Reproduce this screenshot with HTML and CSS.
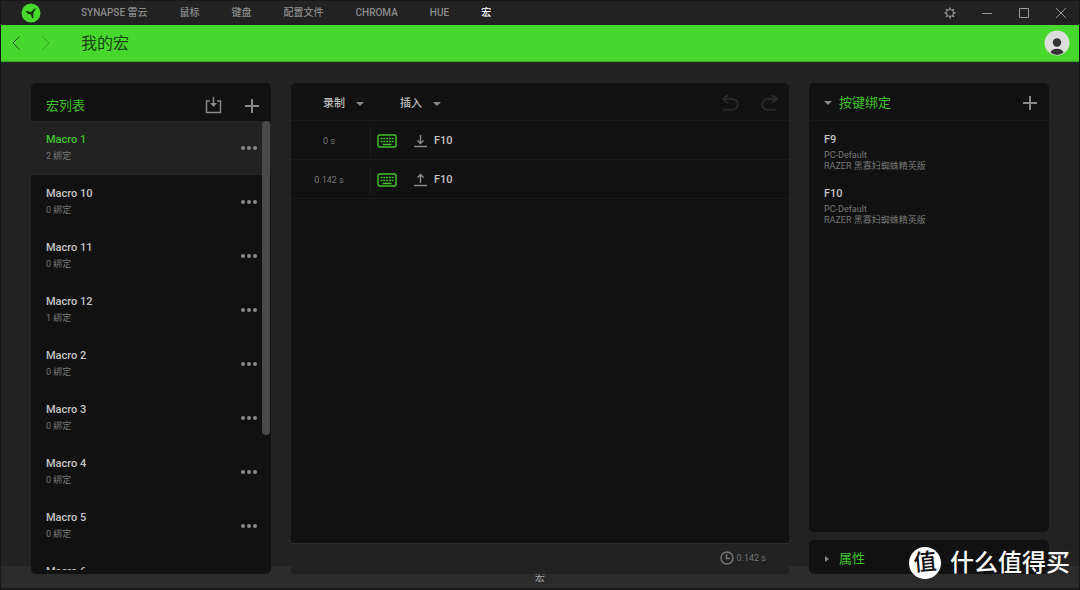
FILE: index.html
```html
<!DOCTYPE html>
<html lang="zh-CN">
<head>
<meta charset="utf-8">
<title>我的宏</title>
<link rel="stylesheet" href="styles.css">
</head>
<body>
<div class="window">
  <header class="topbar">
    <svg class="logo" viewBox="0 0 20 20" aria-hidden="true"><circle cx="10" cy="10" r="9.5" fill="#47d92d"/><path d="M4.600 8.600Q5.500 7.800 7 8.300L10 9.300L13 6Q14 5.300 14.800 5.800L12.200 10.500L12.600 14.500Q12 15.600 11 15.200L10 11.600Q6.500 11.200 4.600 8.600Z" fill="#17300f"/></svg>
    <nav class="tabs">
      <a href="#">SYNAPSE 雷云</a><a href="#">鼠标</a><a href="#">键盘</a><a href="#">配置文件</a><a href="#">CHROMA</a><a href="#">HUE</a><a href="#" class="current">宏</a>
    </nav>
    <div class="controls">
      <button aria-label="设置"><svg viewBox="0 0 12 12"><circle cx="6" cy="6" r="3.500"/><path d="M6 .500v2M6 9.500v2M.500 6h2M9.500 6h2M2.100 2.100l1.400 1.400M8.500 8.500l1.400 1.400M2.100 9.900l1.400-1.400M8.500 3.500l1.400-1.400" stroke-width="1.500"/></svg></button>
      <button aria-label="最小化"><svg viewBox="0 0 12 12"><path d="M1 6.500h10"/></svg></button>
      <button aria-label="最大化"><svg viewBox="0 0 12 12"><path d="M1.500 1.500h9v9h-9z"/></svg></button>
      <button aria-label="关闭"><svg viewBox="0 0 12 12"><path d="M1 1l10 10M11 1L1 11"/></svg></button>
    </div>
  </header>
  <div class="titlebar">
    <button class="arrow" aria-label="后退"><svg viewBox="0 0 8 14"><path d="M7.500.500L1 7l6.500 6.500"/></svg></button>
    <button class="arrow forward" aria-label="前进"><svg viewBox="0 0 8 14"><path d="M.500.500L7 7 .500 13.500"/></svg></button>
    <h1>我的宏</h1>
    <button class="avatar" aria-label="账户"><svg viewBox="0 0 26 26"><circle cx="13" cy="13" r="12.500" fill="#dcdedc"/><circle cx="13" cy="12.500" r="4.200" fill="#333"/><path d="M6.500 22.200Q8 18.700 13 18.700T19.500 22.200Q17 25 13 25T6.500 22.200Z" fill="#333"/></svg></button>
  </div>
  <main class="main">
    <section class="panel macros">
      <div class="panel-head">
        <h2>宏列表</h2>
        <button aria-label="导入"><svg class="import" viewBox="0 0 18 18"><path d="M5 4H1.500v11.500h14V4H12" stroke-width="1.500"/><path d="M8.500 0v8" stroke-width="1.500"/><path d="M5 6h7l-3.500 4z" fill="currentColor" stroke="none"/></svg></button>
        <button aria-label="添加宏"><svg class="plus" viewBox="0 0 14 14"><path d="M7 0v14M0 7h14"/></svg></button>
      </div>
      <div class="list-wrap">
        <ul class="list">
          <li class="selected"><div><b>Macro 1</b><small>2 綁定</small></div><button aria-label="更多"><i></i><i></i><i></i></button></li>
          <li><div><b>Macro 10</b><small>0 綁定</small></div><button aria-label="更多"><i></i><i></i><i></i></button></li>
          <li><div><b>Macro 11</b><small>0 綁定</small></div><button aria-label="更多"><i></i><i></i><i></i></button></li>
          <li><div><b>Macro 12</b><small>1 綁定</small></div><button aria-label="更多"><i></i><i></i><i></i></button></li>
          <li><div><b>Macro 2</b><small>0 綁定</small></div><button aria-label="更多"><i></i><i></i><i></i></button></li>
          <li><div><b>Macro 3</b><small>0 綁定</small></div><button aria-label="更多"><i></i><i></i><i></i></button></li>
          <li><div><b>Macro 4</b><small>0 綁定</small></div><button aria-label="更多"><i></i><i></i><i></i></button></li>
          <li><div><b>Macro 5</b><small>0 綁定</small></div><button aria-label="更多"><i></i><i></i><i></i></button></li>
          <li><div><b>Macro 6</b></div><button aria-label="更多"><i></i><i></i><i></i></button></li>
        </ul>
        <div class="thumb"></div>
      </div>
    </section>
    <section class="panel editor">
      <div class="toolbar">
        <button class="menu">录制<span class="caret"></span></button>
        <button class="menu">插入<span class="caret"></span></button>
        <div class="history">
          <button aria-label="撤销"><svg viewBox="0 0 18 18"><path d="M7 0L2 4l5 4M2 4h9.500a5.300 5.300 0 0 1 0 10.700H2"/></svg></button>
          <button aria-label="重做"><svg viewBox="0 0 18 18"><path d="M11 0l5 4-5 4M16 4H6.500a5.300 5.300 0 0 0 0 10.700H15"/></svg></button>
        </div>
      </div>
      <div class="event">
        <span class="time">0 s</span>
        <svg class="keyboard" viewBox="0 0 20 14"><rect x="1" y="1" width="18" height="12" rx="1.500"/><path d="M3.500 4.500h13M3.500 7.500h13" stroke-dasharray="2 .800"/><path d="M5.500 10.500h9"/></svg>
        <svg class="press" viewBox="0 0 13 14"><path d="M6.500 1v8M3.500 6.500l3 3 3-3M0 12.500h13"/></svg>
        <span class="key">F10</span>
      </div>
      <div class="event">
        <span class="time">0.142 s</span>
        <svg class="keyboard" viewBox="0 0 20 14"><rect x="1" y="1" width="18" height="12" rx="1.500"/><path d="M3.500 4.500h13M3.500 7.500h13" stroke-dasharray="2 .800"/><path d="M5.500 10.500h9"/></svg>
        <svg class="press" viewBox="0 0 13 14"><path d="M6.500 10V1.500M3.500 4.500l3-3 3 3M0 12.500h13"/></svg>
        <span class="key">F10</span>
      </div>
      <div class="duration"><svg viewBox="0 0 14 14"><circle cx="7" cy="7" r="6"/><path d="M6.500 3v4.500H10"/></svg>0.142 s</div>
    </section>
    <aside class="side">
      <section class="panel bindings">
        <div class="side-head"><span class="caret"></span><h2>按键绑定</h2><button aria-label="添加绑定"><svg class="plus" viewBox="0 0 14 14"><path d="M7 0v14M0 7h14"/></svg></button></div>
        <article><b>F9</b><p>PC-Default<br>RAZER 黑寡妇蜘蛛精英版</p></article>
        <article><b>F10</b><p>PC-Default<br>RAZER 黑寡妇蜘蛛精英版</p></article>
      </section>
      <section class="panel properties"><span class="caret right"></span><h2>属性</h2></section>
    </aside>
  </main>
  <footer class="footer">宏</footer>
</div>
<div class="watermark"><span class="badge">值</span>什么值得买</div>
</body>
</html>
```
FILE: styles.css
```css
* { box-sizing: border-box; }
body {
  margin: 0;
  background: #222;
  color: #bbb;
  font: 11px/16px Roboto, "Noto Sans CJK SC", sans-serif;
}
button { margin: 0; padding: 0; border: 0; background: none; color: inherit; font: inherit; display: flex; }
svg { display: block; fill: none; stroke: currentColor; }
h1, h2, p, ul { margin: 0; padding: 0; font-weight: 400; }
.window { display: flex; flex-direction: column; height: 100vh; border: 1px solid #171717; border-bottom-width: 2px; }

.topbar { display: flex; align-items: center; height: 24px; flex: none; padding: 0 12px 0 20px; }
.logo { width: 20px; height: 20px; stroke: none; }
.tabs { display: flex; gap: 32px; margin-left: 40px; }
.tabs a { color: #8a8a8a; text-decoration: none; font-size: 10px; font-weight: 500; }
.tabs .current { color: #fff; }
.controls { display: flex; gap: 25px; margin-left: auto; color: #999; }
.controls svg { width: 12px; height: 12px; }

.titlebar { display: flex; align-items: center; height: 37px; flex: none; padding: 0 9px 0 11px; background: #47d82d; border-bottom: 1px solid #35aa22; color: #174b0f; }
.arrow svg { width: 8px; height: 14px; }
.forward { margin-left: 22px; color: #36a323; }
.titlebar h1 { margin-left: 31px; padding-top: 2px; font-size: 16px; line-height: 24px; color: #1b4414; }
.avatar { margin-left: auto; }
.avatar svg { width: 26px; height: 26px; stroke: none; }

.main { position: relative; z-index: 1; display: flex; gap: 20px; flex: 1; min-height: 0; margin-bottom: -8px; padding: 21px 30px 0; }
.panel { background: #111; border-radius: 5px; overflow: hidden; }
.panel h2 { color: #3fc22a; font-size: 13px; }
.plus { width: 14px; height: 14px; color: #888; stroke-width: 2; }

.macros { display: flex; flex-direction: column; width: 240px; flex: none; padding-bottom: 4px; }
.panel-head { display: flex; align-items: center; height: 38px; flex: none; padding: 7px 12px 0 15px; }
.panel-head h2 { margin-right: auto; }
.import { width: 18px; height: 18px; margin-right: 22px; color: #888; }
.list-wrap { position: relative; flex: 1; min-height: 0; }
.list { height: 100%; overflow-y: auto; scrollbar-width: none; list-style: none; }
.list li { display: flex; align-items: flex-start; justify-content: space-between; height: 54px; padding: 11px 14px 0 15px; }
.list .selected { background: #222; }
.list b, .list small { display: block; }
.list b, .key, .bindings b { font-size: 11px; font-weight: 500; color: #c4c4c4; }
.list .selected b { color: #3fc22a; }
.list small { font-size: 9px; color: #777; }
.list button { gap: 2px; padding-top: 14px; }
.list i { width: 4px; height: 4px; border-radius: 2px; background: #888; }
.thumb { position: absolute; top: 0; right: 1px; width: 8px; height: 70%; border-radius: 4px; background: #4a4a4a; }

.editor { display: flex; flex-direction: column; flex: 1; }
.toolbar { display: flex; align-items: center; height: 38px; padding: 4px 10px 0 32px; border-bottom: 1px solid #191919; }
.menu { align-items: center; gap: 11px; margin-right: 36px; font-weight: 500; }
.caret { width: 0; height: 0; border: 4px solid transparent; border-top-color: #888; border-bottom: 0; }
.right { border: 3px solid transparent; border-left: 4px solid #888; border-right: 0; }
.history { display: flex; gap: 22px; margin-left: auto; color: #292929; }
.history svg { width: 18px; height: 18px; stroke-width: 2; }
.event { display: flex; align-items: center; height: 39px; padding-top: 1px; border-bottom: 1px solid #191919; }
.time { width: 80px; padding-right: 3px; line-height: 30px; border-right: 1px solid #1c1c1c; text-align: center; font-size: 9px; color: #777; }
.keyboard { width: 20px; height: 14px; margin-left: 6px; color: #3fc22a; stroke-width: 1.5; }
.press { width: 13px; height: 14px; margin: 0 7px 0 17px; color: #888; stroke-width: 1.5; }
.duration { display: flex; align-items: center; justify-content: flex-end; gap: 3px; height: 31px; margin-top: auto; padding-right: 23px; padding-bottom: 3px; background: #222; border-top: 1px solid #303030; font-size: 9px; color: #777; }
.duration svg { width: 14px; height: 14px; stroke-width: 1.5; }

.side { display: flex; flex-direction: column; gap: 8px; width: 240px; flex: none; }
.bindings { flex: 1; }
.side-head { display: flex; align-items: center; height: 38px; padding: 3px 12px 0 15px; border-bottom: 1px solid #191919; }
.side-head h2 { margin-left: 7px; }
.side-head button { margin-left: auto; }
.bindings article { padding: 11px 15px 0; height: 54px; }
.bindings b { display: block; }
.bindings p { margin-top: 2px; font-size: 9px; line-height: 11px; color: #777; }
.properties { display: flex; align-items: center; gap: 10px; height: 34px; padding: 4px 15px 0 16px; }

.footer { height: 22px; flex: none; background: #2b2b2b; color: #aaa; font-size: 10px; line-height: 24px; text-align: center; }

.watermark { position: absolute; z-index: 2; right: 10px; bottom: 11px; display: flex; align-items: center; gap: 9px; color: #fff; font-size: 24px; line-height: 32px; font-weight: 500; }
.badge { width: 32px; height: 32px; border-radius: 50%; background: #fff; color: #111; text-align: center; font-size: 23px; transform: rotate(-5deg); }
```
